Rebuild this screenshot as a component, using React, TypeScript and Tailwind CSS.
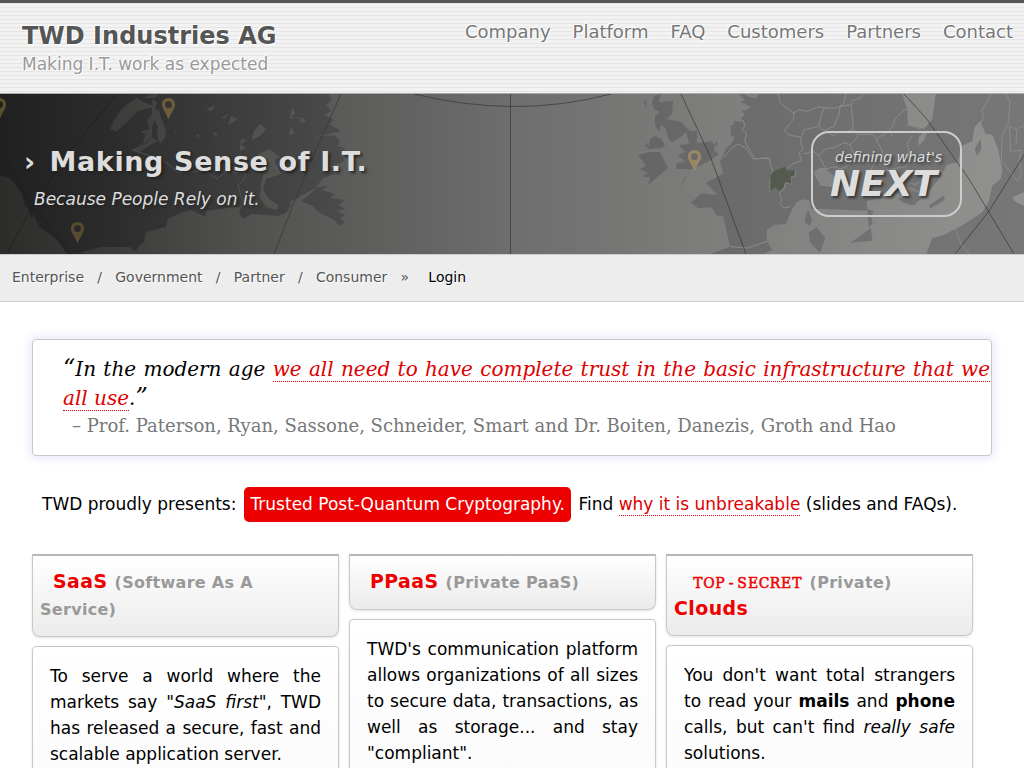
import React from "react";

const NAV = ["Company", "Platform", "FAQ", "Customers", "Partners", "Contact"];
const CRUMBS = ["Enterprise", "Government", "Partner", "Consumer"];

function Pin({ x, y, color }: { x: number; y: number; color: string }) {
  return (
    <path
      transform={`translate(${x} ${y})`}
      fill={color}
      fillRule="evenodd"
      d="M0 0C-3.8 0-6.6 2.900-6.600 6.500C-6.600 9.500-4.500 12.500-2.800 15.500L0 21.300L2.800 15.500C4.500 12.500 6.600 9.500 6.600 6.500C6.600 2.900 3.800 0 0 0ZM0 3.300A3.400 3.400 0 1 1 0 10.100A3.400 3.400 0 1 1 0 3.300Z"
    />
  );
}

function WorldMap() {
  return (
    <svg className="absolute inset-0" width="1024" height="160" viewBox="0 0 1024 160">
      <defs>
        <linearGradient id="sea" gradientUnits="userSpaceOnUse" x1="0" y1="0" x2="1024" y2="0">
          <stop offset="0" stopColor="#2c2c2b" />
          <stop offset=".1" stopColor="#3a3a38" />
          <stop offset=".25" stopColor="#525351" />
          <stop offset=".38" stopColor="#60615f" />
          <stop offset=".51" stopColor="#6e6f6e" />
          <stop offset=".7" stopColor="#7e7f7c" />
          <stop offset="1" stopColor="#929390" />
        </linearGradient>
        <linearGradient id="land" gradientUnits="userSpaceOnUse" x1="0" y1="0" x2="1024" y2="0">
          <stop offset="0" stopColor="#202020" />
          <stop offset=".1" stopColor="#2b2b2b" />
          <stop offset=".2" stopColor="#393939" />
          <stop offset=".32" stopColor="#494949" />
          <stop offset=".64" stopColor="#666666" />
          <stop offset=".75" stopColor="#6d6d6d" />
          <stop offset="1" stopColor="#777777" />
        </linearGradient>
        <linearGradient id="seaEast" href="#sea" gradientUnits="userSpaceOnUse" x1="-2172" y1="0" x2="900" y2="0" />
        <linearGradient id="landEast" href="#land" gradientUnits="userSpaceOnUse" x1="-2172" y1="0" x2="900" y2="0" />
      </defs>
      <rect width="1024" height="160" fill="url(#sea)" />
      {/* North America */}
      <path
        fill="url(#land)"
        d="M0 0H329L332 6L326 11L331 17L325 21L334 26L329 30L341 37L328 40L318 42L334 41L340 46L338 52L346 55L340 60L345 67L336 71L328 72L336 75L334 80L322 85L316 94L328 91L322 96L335 100L330 104L345 106L339 111L345 115L337 117L345 121L340 125L345 128L339 132L334 126L322 120L317 117L313 112L301 107L308 102L316 94L306 99L290 108L291 112L286 119L278 122L264 121L252 120L243 125L239 119L242 111L246 109L239 113L226 114L205 117L206 123L195 118L190 116L181 119L168 125L166 133L150 137L146 138L144 148L139 152L135 158L130 153L118 153L100 153L90 156L82 158L84 160H67L55 144L44 136L40 134L33 120L32 126L28 115L24 110L22 100L10 84L0 82Z"
      />
      <g fill="url(#sea)">
        <path d="M110 35L114 26L121 16L130 8L137 4L141 7L151 11L156 13L149 14L138 17L131 24L124 31L116 38Z" />
        <path d="M152 5L157 8L155 15L159 16L161 24L166 36L165 44L160 50L157 42L158 32L154 26L152 33L152 42L147 49L141 51L132 56L140 58L150 51L158 47L151 43L143 51L145 40L140 38L150 35L147 27L152 20Z" />
        <path d="M143 4H155L158 0H148L153 0Z" />
        <path d="M259 60L269 55L280 63L274 66L281 80L266 85L263 95L269 105L278 111L277 116L266 113L260 103L261 90L264 78L262 70L256 65Z" />
        <path d="M231 22L238 25L228 31ZM252 46L254 37L260 30L266 35L260 42ZM241 45L246 46L240 51ZM222 23L229 20L224 25ZM206 15L216 11L211 17ZM213 38L217 39L216 44ZM240 50L246 54L240 57ZM292 14L290 25L295 19ZM291 33L289 41L294 39ZM306 27L300 29L302 23ZM175 39L176 37L174 36ZM196 40L200 41L197 44Z" />
      </g>
      <path
        fill="none"
        stroke="#525353"
        strokeWidth=".9"
        d="M132 56L163 66L179 79L206 77L217 85L227 77L237 79L246 80L243 87L238 91L240 99L243 107M291 24L300 24L305 27M316 43L326 40L333 43"
      />
      {/* British Isles */}
      <path
        fill="url(#land)"
        d="M654 2L661 0L659 8L673 7L672 20L666 25L672 26L681 28L690 37L697 37L697 49L711 47L715 51L714 57L719 60L711 66L699 72L689 76L684 88L680 93L690 75L676 75L677 69L685 68L678 61L685 58L679 51L689 50L686 38L681 43L672 48L669 46L666 35L661 31L659 38L655 31L655 22L660 18L654 15L652 9ZM648 55L650 45L655 42L661 45L665 51L662 54ZM638 61L649 58L660 58L668 74L648 91L650 83L642 83L648 79L640 75L646 72Z"
      />
      <path fill="url(#land)" d="M644 8L647 6L646 14ZM646 18L651 22L648 20ZM645 53L648 48L648 53ZM715 47L718 49L716 54Z" />
      {/* Europe, drawn on a triple-size grid */}
      <g transform="translate(724 0) scale(.333333)">
        <path
          fill="url(#landEast)"
          d="M900 0H105L95 12L78 10L60 0H45L62 18L48 24L80 38L66 50L52 48L62 64L50 72L58 82L52 84L30 80L30 92L20 95L20 124L32 130L22 148L5 165L-5 190L-12 203L-2 238L-54 266L-20 303L-67 298L-99 326L-77 343L-37 340L-24 363L-2 368L18 458L-42 480H900Z"
        />
        <g fill="url(#seaEast)">
          <path d="M120 480L145 468L128 440V408L150 393L185 390L205 345L220 322L240 316L256 320L262 345L300 345L430 350L428 320L505 308L520 292L560 335L600 310L640 260L670 212L700 205L715 155L745 140L752 100L768 80L785 120L805 122L822 165L835 228L830 255L805 275L795 320L775 355L745 375L705 400L660 422L625 432L607 480Z" />
          <path d="M535 0L550 50L552 92L600 105L625 75L635 0ZM583 155L583 132L597 115L612 110L600 138ZM270 240L286 222L305 225L335 250L342 280L290 275ZM865 310L900 295V335L872 322Z" />
        </g>
        <g fill="url(#landEast)">
          <path d="M243 370L252 347L264 375L258 397L242 385ZM254 415L278 400L304 432L288 476L258 445ZM380 446L440 402L446 440ZM430 345L448 352L442 372L446 388L434 402ZM520 312L550 310L582 322L570 334L540 328ZM615 334L660 304L662 318L618 344ZM752 165L770 134L772 165L760 185Z" />
          <path d="M500 250L570 225L592 262L598 300L565 292L520 296Z" />
        </g>
        <g fill="url(#seaEast)" opacity=".6">
          <path d="M545 262L570 268L592 262L575 276ZM540 282L562 280L590 294L560 290ZM520 250L540 244L532 260ZM628 228L650 228L672 238L650 238Z" />
        </g>
        <g fill="none" stroke="#8b8c89" strokeWidth="3">
          <path d="M162 0L170 28L210 58L208 76L182 108L192 122L232 130L240 108L284 97L290 72L300 42L340 42L358 30L366 0" />
          <path d="M210 56L225 48L250 52L285 38L305 42M284 97L300 110L330 97L345 62L348 38L382 32L385 20L410 12L418 0M382 34L388 105L365 115L345 112L330 125L305 112M388 105L400 122L445 120L458 134L490 115L505 100L515 72L540 48L550 48M505 128L500 112M550 92L572 98L590 106" />
          <path d="M58 78L62 96L55 108L68 118L62 142L90 190M0 190L20 165L42 150L66 162L88 195L135 192L140 215L148 235M90 194L135 192" />
          <path d="M232 130L230 150L238 165L226 175L232 200L205 210L190 222M240 180L268 172L284 185L305 165L335 160L360 146L378 152L392 140L402 124M284 185L306 225L330 218L350 225L372 215L392 188L378 152M392 188L440 184L460 190L482 205L475 170L455 135M268 235L290 222L306 225M482 205L490 230L520 222L548 218L555 170L550 150L565 125M458 192L440 230L450 250" />
          <path d="M212 228L214 245L200 248L202 270L184 266L180 285L165 298L174 318L168 330L180 342L200 338M138 295L138 255M148 235L138 252" />
          <path d="M802 0L785 32L772 52L780 68L770 90M845 0L858 22L854 85L834 128L832 202L866 242L880 262L892 245L886 200L892 168L860 172L856 96L878 106L900 95M878 106L876 150" />
          <path d="M18 458L70 462L130 442M695 405L710 448L736 480" />
        </g>
        <path fill="#545a4d" d="M139 245L150 232L182 218L188 230L212 228V244L200 248L202 270L184 264L178 280L165 292L155 280L139 290Z" />
      </g>
      {/* Meridians and parallels */}
      <path fill="none" stroke="#1d1d1b" strokeOpacity=".75" strokeWidth=".9" d="M117 0L70 57L33 111L7 160M0 57L30 108L71 160" />
      <g fill="none" stroke="#33352e" strokeOpacity=".75" strokeWidth=".9">
        <path d="M341 0L311 67L291 116L274 160M510.500 0V160M414 0Q463 12 512 12.500T611 0" />
        <path d="M681 0L710 62L746 160M904 0L926 24L969 85L1014 160M955 160L989 117L1024 61" />
      </g>
      <Pin x={-0.500} y={4} color="#5c4e2e" />
      <Pin x={168.500} y={4} color="#6c5c3c" />
      <Pin x={77.500} y={128} color="#574b31" />
      <Pin x={694.500} y={56} color="#998766" />
    </svg>
  );
}

function Card({ title, children }: { title: React.ReactNode; children: React.ReactNode }) {
  return (
    <section className="w-[307px]">
      <h2 className="rounded-b-[8px] border border-t-2 border-[#c8c8c8] border-t-[#b8b8b8] bg-linear-to-b from-white to-[#ebebeb] px-[7px] pt-[12px] pb-[15px] text-[18.900px] leading-[26px] font-bold tracking-[.45px] whitespace-nowrap text-[#e00] shadow-[0_1px_3px_rgba(0,0,0,.12)]">
        {title}
      </h2>
      <div className="mt-[9px] h-[340px] rounded-[4px] border border-[#c8c8c8] bg-linear-to-b from-white to-[#f6f6f6] px-[17px] pt-[16px] text-justify text-[17px] leading-[26px] text-black shadow-[0_1px_3px_rgba(0,0,0,.12)]">
        {children}
      </div>
    </section>
  );
}

const Sub = ({ children }: { children: React.ReactNode }) => (
  <span className="text-[16px] leading-none tracking-[.3px] text-[#999]">{children}</span>
);

/* Typewriter lettering: every letter sits in a cell of the same width. */
const Stamp = ({ text }: { text: string }) => (
  <span className="inline-flex pl-[18.500px] font-['DejaVu_Serif_Condensed','DejaVu_Serif',serif] text-[15.500px] leading-[20px] font-normal tracking-normal [-webkit-text-stroke:.5px_#e00]">
    {text.split("").map((c, i) => (
      <span key={i} className="inline-flex w-[11px] justify-center">
        {c}
      </span>
    ))}
  </span>
);

export default function App() {
  return (
    <div className="h-[768px] w-[1024px] overflow-hidden bg-white font-['DejaVu_Sans',sans-serif] text-black">
      <header className="flex h-[94px] justify-between border-t-3 border-b border-t-[#555] border-b-[#aaa] bg-[repeating-linear-gradient(to_bottom,#e5e5e5_0,#e5e5e5_1px,#f2f2f2_1px,#f2f2f2_4px)] pr-[11px] pl-[22px] whitespace-nowrap [text-shadow:1px_1px_1px_#fff,-1px_-1px_1px_#fff]">
        <div className="pt-[18px]">
          <div className="text-[24px] leading-[30px] font-bold text-[#555]">TWD Industries AG</div>
          <div className="text-[17px] leading-[26px] text-[#999]">Making I.T. work as expected</div>
        </div>
        <nav className="flex gap-[22px] pt-[16px] text-[18px] leading-[26px] text-[#777]">
          {NAV.map((n) => (
            <a key={n}>{n}</a>
          ))}
        </nav>
      </header>

      <div className="relative h-[160px] overflow-hidden">
        <WorldMap />
        <div className="relative flex h-full justify-between pr-[62px] pl-[24px] text-[#ddd]">
          <div className="pt-[50px] whitespace-nowrap [text-shadow:2px_2px_3px_#222]">
            <div className="flex text-[27px] leading-[36px] font-bold tracking-[.62px]">
              <span className="w-[25.500px]">›</span>
              <span>Making Sense of I.T.</span>
            </div>
            <div className="pt-[6px] pl-[10px] text-[17px] leading-[26px] italic">Because People Rely on it.</div>
          </div>
          <div className="mt-[37px] h-[86px] w-[151px] rounded-[18px] border-2 border-[#ccc] pt-[14px] pl-[17px] italic [text-shadow:2px_2px_3px_#333]">
            <div className="pl-[5px] text-[14px] leading-[20px]">defining what's</div>
            <div className="text-[36px] leading-[34px] font-bold">NEXT</div>
          </div>
        </div>
      </div>

      <nav className="flex h-[48px] items-center border-y border-[#ccc] bg-[#ededed] pb-[2px] pl-[12px] text-[14px] leading-[20px] whitespace-nowrap text-[#555] [text-shadow:1px_1px_1px_#fff]">
        {CRUMBS.map((c, i) => (
          <React.Fragment key={c}>
            <a>{c}</a>
            <span className="pr-[13.250px] pl-[13.250px]">{i < 3 ? "/" : "»"}</span>
          </React.Fragment>
        ))}
        <a className="pl-[6px] text-black">Login</a>
      </nav>

      <main className="px-[32px] pt-[37px]">
        <blockquote className="h-[117px] rounded-[4px] border border-[#c8c8cc] pt-[15px] pl-[30px] font-['DejaVu_Serif',serif] whitespace-nowrap shadow-[0_0_8px_3px_#e9e9fc]">
          <p className="text-[20px] leading-[29px] italic">
            <span className="[word-spacing:.94px]">
              <span className="text-[24px] leading-none">“</span>In the modern age{" "}
              <a className="border-b border-dotted border-[#d00] text-[#d00]">
                we all need to have complete trust in the basic infrastructure that we
              </a>
            </span>
            <br />
            <a className="border-b border-dotted border-[#d00] text-[#d00]">all use</a>.
            <span className="text-[24px] leading-none">”</span>
          </p>
          <p className="pl-[9px] text-[18px] leading-[26px] text-[#777]">
            – Prof. Paterson, Ryan, Sassone, Schneider, Smart and Dr. Boiten, Danezis, Groth and Hao
          </p>
        </blockquote>

        <p className="mt-[29px] flex h-[39px] items-center pl-[10px] text-[17px] leading-[26px] whitespace-nowrap">
          <span className="pb-[2px]">TWD proudly presents:</span>
          <a className="mr-[5.300px] ml-[5.800px] flex h-[39px] items-center rounded-[7px] border-2 border-white bg-[#e00] px-[6.200px] pb-[1px] text-white">
            Trusted Post-Quantum Cryptography.
          </a>
          <span className="pb-[2px]">
            Find <a className="border-b border-dotted border-[#d00] pb-px text-[#d00]">why it is unbreakable</a> (slides and
            FAQs).
          </span>
        </p>

        <div className="mt-[30px] flex items-start gap-[10px]">
          <Card
            title={
              <>
                <span className="pl-[13px]">SaaS</span>{" "}
                <Sub>
                  (Software As A
                  <span className="-mb-[2px] block pt-[3px] leading-[26px]">Service)</span>
                </Sub>
              </>
            }
          >
            To serve a world where the markets say "<i>SaaS first</i>", TWD has released a secure, fast and scalable
            application server.
          </Card>
          <Card
            title={
              <>
                <span className="pl-[13px]">PPaaS</span> <Sub>(Private PaaS)</Sub>
              </>
            }
          >
            TWD's communication platform allows organizations of all sizes to secure data, transactions, as well as
            storage... and stay "compliant".
          </Card>
          <Card
            title={
              <>
                <Stamp text="TOP-SECRET" /> <Sub>(Private)</Sub>
                <span className="-mb-px block pt-px">Clouds</span>
              </>
            }
          >
            You don't want total strangers to read your <b>mails</b> and <b>phone</b> calls, but can't find{" "}
            <i>really safe</i> solutions.
          </Card>
        </div>
      </main>
    </div>
  );
}
